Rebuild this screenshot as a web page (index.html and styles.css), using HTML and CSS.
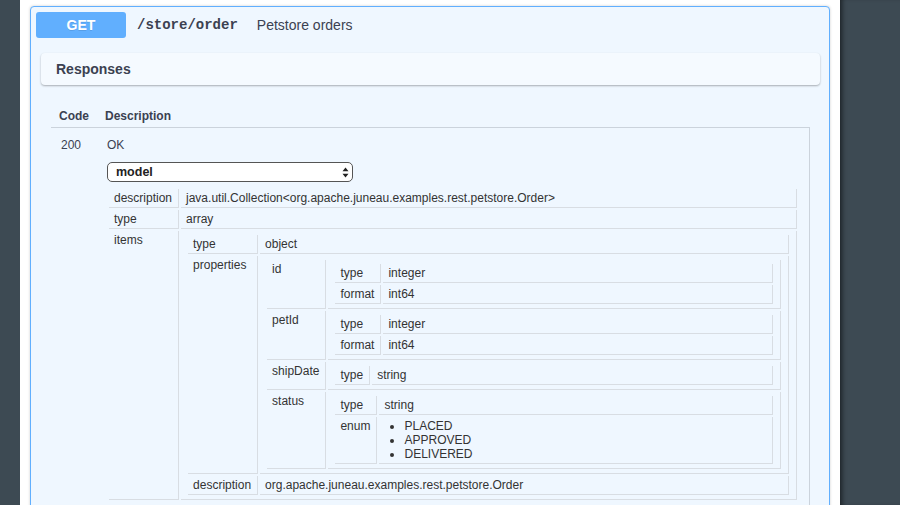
FILE: index.html
```html
<!DOCTYPE html>
<html lang="en">
<head>
<meta charset="utf-8">
<title>Petstore orders</title>
<link rel="stylesheet" href="styles.css">
</head>
<body>
<div class="page">
  <nav class="left"></nav>
  <main class="main">
    <div class="opblock">
      <div class="summary">
        <span class="method">GET</span>
        <span class="path">/store/order</span>
        <span class="sdesc">Petstore orders</span>
      </div>
      <div class="section-header"><h4>Responses</h4></div>
      <div class="responses">
        <table class="resp">
          <thead>
            <tr><th class="c-code">Code</th><th>Description</th></tr>
          </thead>
          <tbody>
            <tr>
              <td class="code">200</td>
              <td class="rdesc">
                <div class="ok">OK</div>
                <div class="select">
                  <span>model</span>
                  <svg class="arrows" width="7" height="11" viewBox="0 0 7 11"><path d="M3.5 0.5 L6.5 4.2 H0.5 Z M0.5 6.8 H6.5 L3.5 10.5 Z" fill="#222"/></svg>
                </div>
                <table class="m">
                  <tr><td class="k">description</td><td>java.util.Collection&lt;org.apache.juneau.examples.rest.petstore.Order&gt;</td></tr>
                  <tr><td class="k">type</td><td>array</td></tr>
                  <tr><td class="k">items</td><td>
                    <table class="m">
                      <tr><td class="k">type</td><td>object</td></tr>
                      <tr><td class="k">properties</td><td>
                        <table class="m">
                          <tr><td class="k">id</td><td>
                            <table class="m">
                              <tr><td class="k">type</td><td>integer</td></tr>
                              <tr><td class="k">format</td><td>int64</td></tr>
                            </table>
                          </td></tr>
                          <tr><td class="k">petId</td><td>
                            <table class="m">
                              <tr><td class="k">type</td><td>integer</td></tr>
                              <tr><td class="k">format</td><td>int64</td></tr>
                            </table>
                          </td></tr>
                          <tr><td class="k">shipDate</td><td>
                            <table class="m">
                              <tr><td class="k">type</td><td>string</td></tr>
                            </table>
                          </td></tr>
                          <tr><td class="k">status</td><td>
                            <table class="m">
                              <tr><td class="k">type</td><td>string</td></tr>
                              <tr><td class="k">enum</td><td>
                                <ul class="enum">
                                  <li>PLACED</li>
                                  <li>APPROVED</li>
                                  <li>DELIVERED</li>
                                </ul>
                              </td></tr>
                            </table>
                          </td></tr>
                        </table>
                      </td></tr>
                      <tr><td class="k">description</td><td>org.apache.juneau.examples.rest.petstore.Order</td></tr>
                    </table>
                  </td></tr>
                </table>
              </td>
            </tr>
          </tbody>
        </table>
      </div>
    </div>
  </main>
  <aside class="right"></aside>
</div>
</body>
</html>
```

FILE: styles.css
```css
html, body {
  margin: 0;
  padding: 0;
  overflow: hidden;
}

body {
  font-family: "Liberation Sans", Arial, Helvetica, sans-serif;
  color: #3b4151;
}

.page {
  display: flex;
  height: 505px;
  overflow: hidden;
}

.left {
  flex: none;
  width: 20px;
  background: #3d4a53;
}

.main {
  flex: 1;
  min-width: 0;
  background: #fff;
  padding: 6px 10px 0;
  overflow: hidden;
}

.right {
  flex: none;
  width: 60px;
  background: #3d4a53;
  box-shadow: inset 5px 0 5px -3px rgba(0, 0, 0, 0.55);
}

.opblock {
  border: 1px solid #61affe;
  border-radius: 4px;
  background: #eff7ff;
  box-shadow: 0 0 3px rgba(0, 0, 0, 0.19);
}

.summary {
  display: flex;
  align-items: center;
  padding: 5px;
}

.method {
  flex: none;
  width: 90px;
  height: 26px;
  display: flex;
  align-items: center;
  justify-content: center;
  background: #61affe;
  color: #fff;
  font-size: 14px;
  font-weight: 700;
  border-radius: 3px;
  text-shadow: 0 1px 0 rgba(0, 0, 0, 0.1);
}

.path {
  margin-left: 11px;
  font-family: "Liberation Mono", "Courier New", monospace;
  font-size: 14px;
  font-weight: 700;
  color: #3b4151;
}

.sdesc {
  margin-left: 19px;
  font-size: 14px;
  color: #3b4151;
}

.section-header {
  margin: 10px 9px 0 10px;
  padding: 8px 15px;
  background: #f5faff;
  border-radius: 4px;
  box-shadow: 0 1px 2px rgba(0, 0, 0, 0.3);
}

.section-header h4 {
  margin: 0;
  font-size: 14px;
  line-height: 16px;
  font-weight: 700;
  color: #3b4151;
}

.responses {
  padding: 14px 19px 0 20px;
}

.resp {
  width: 100%;
  border-collapse: collapse;
}

.resp th {
  text-align: left;
  font-size: 12px;
  line-height: 14px;
  font-weight: 700;
  color: #3b4151;
  padding: 10px 8px 4px;
  border-bottom: 1px solid #cbd3dc;
}

.resp th.c-code {
  width: 30px;
}

.resp > tbody > tr > td {
  vertical-align: top;
  font-size: 12px;
  line-height: 14px;
  color: #3b4151;
  padding: 10px;
}

.resp td.rdesc {
  border-right: 1px solid #cbd3dc;
}

.select {
  margin: 10px 0 5px;
  width: 246px;
  height: 20px;
  box-sizing: border-box;
  border: 1px solid #555;
  border-radius: 5px;
  background: #fff;
  display: flex;
  align-items: center;
  justify-content: space-between;
  padding: 0 3px 0 8px;
  font-size: 12.5px;
  font-weight: 700;
  color: #222;
}

.arrows {
  display: block;
}

.m {
  width: 100%;
  border-collapse: separate;
  border-spacing: 2px;
}

.m td {
  padding: 2px 5px;
  border-right: 1px solid #d8dde3;
  border-bottom: 1px solid #d8dde3;
  vertical-align: top;
  font-size: 12px;
  line-height: 14px;
  color: #333;
}

.m td.k {
  width: 1%;
  white-space: nowrap;
  padding-right: 6px;
}

.enum {
  margin: 0;
  padding-left: 20px;
}

.enum li {
  line-height: 14px;
}
```
